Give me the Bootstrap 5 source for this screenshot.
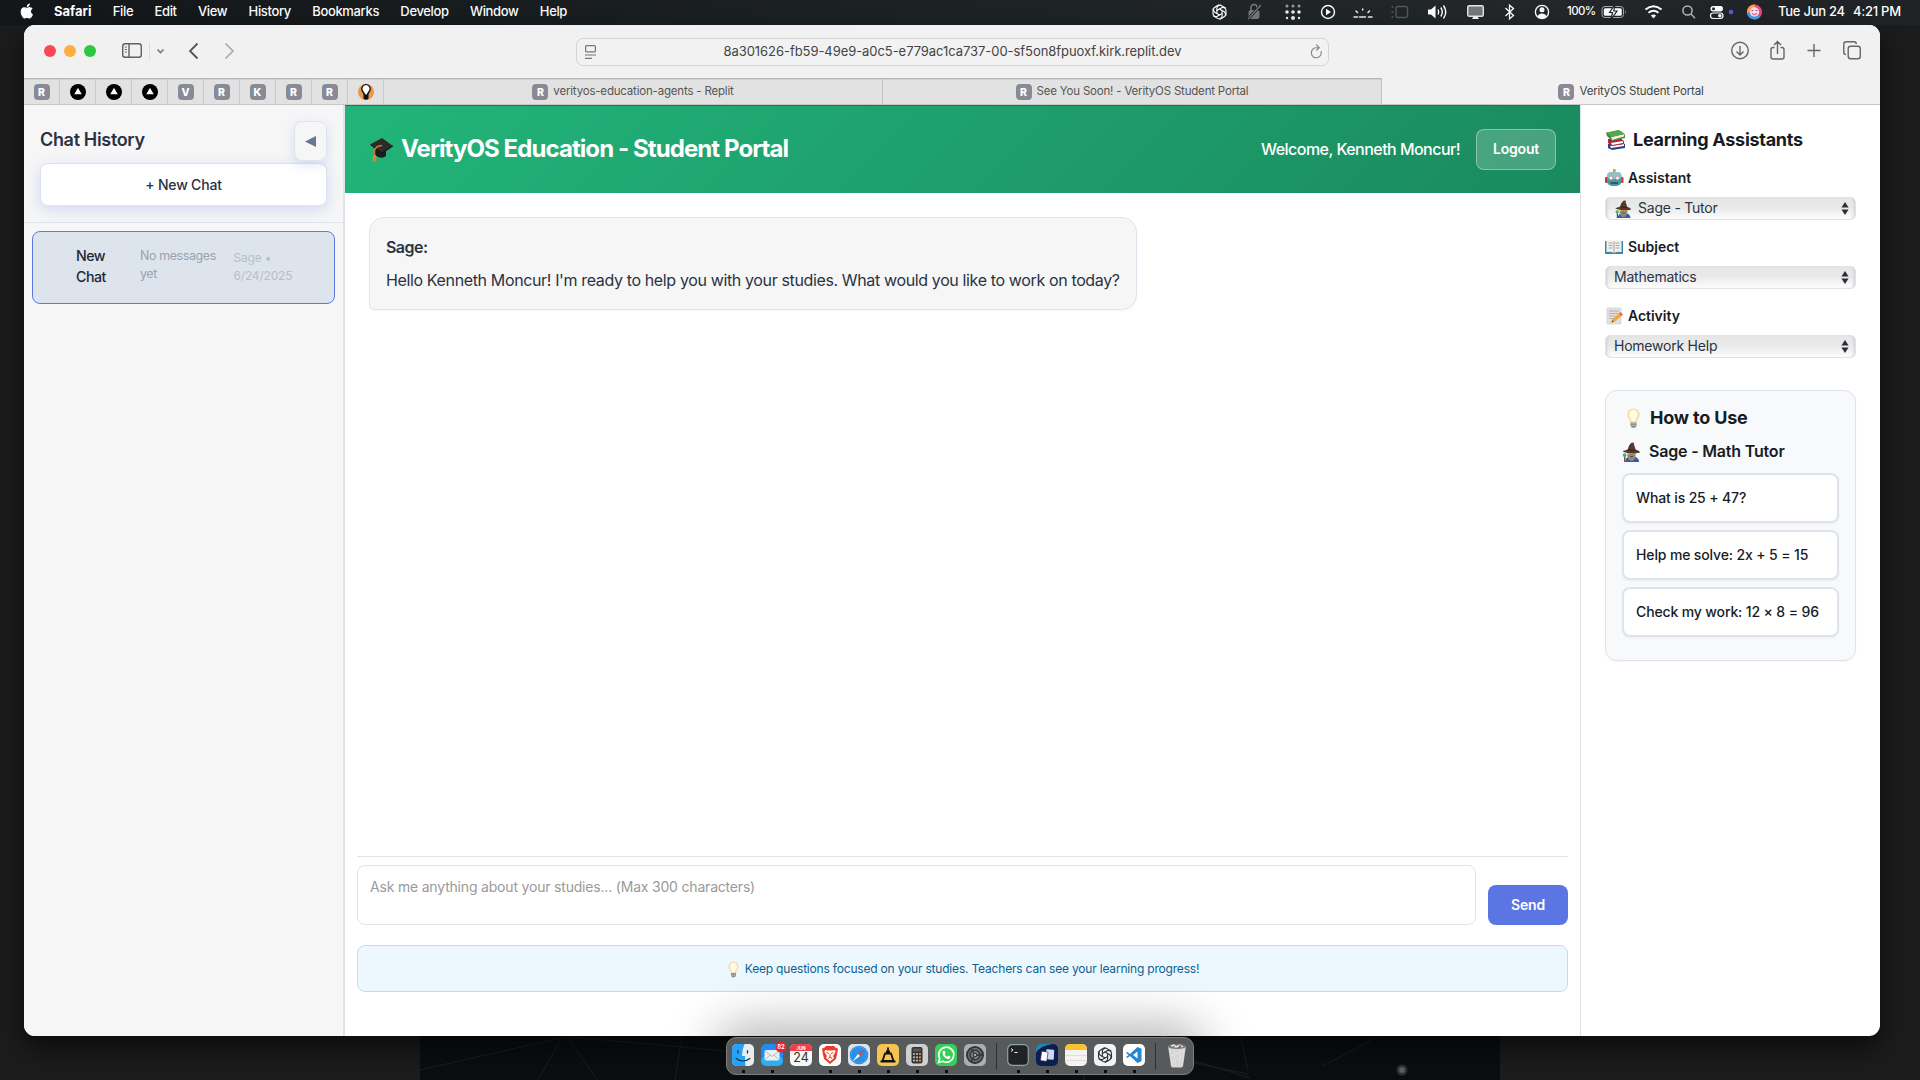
<!DOCTYPE html>
<html lang="en">
<head>
<meta charset="utf-8">
<title>VerityOS Student Portal</title>
<link href="https://cdn.jsdelivr.net/npm/bootstrap@5.3.0/dist/css/bootstrap.min.css" rel="stylesheet">
<style>
:root{--edge:#dde4ec;--ink:#2a3342;--deep:#171c24}
body{width:1920px;height:1080px;overflow:hidden;background:#1c1c1c;font-family:Inter,"Liberation Sans",sans-serif;font-size:14px;line-height:1.2;color:var(--ink)}
.ls{white-space:nowrap;display:block;flex:none;letter-spacing:-.19px}
.wallpaper{position:absolute;left:420px;top:1036px;z-index:0}
.menubar{height:25px;background:linear-gradient(90deg,#13171a,#1d2225 50%,#23272a 80%,#202325);color:#fff;font-size:13px;font-weight:500;padding:0 19px 1px 20px}
.menus{gap:21.3px}
.menus .ls{letter-spacing:-.35px}
.menus .fw-bold{letter-spacing:0}
.menubar svg{display:block;flex:none}
.pct{width:40px;padding-left:9px;font-size:11.5px;letter-spacing:-.6px}
.date{width:83px;padding-left:8px;letter-spacing:-.26px}
.time{width:48px;letter-spacing:-.26px}
.window{height:1011px;margin:0 40px 0 24px;border-radius:11px;overflow:hidden;background:#fff;box-shadow:0 12px 28px rgba(0,0,0,.6)}
.toolbar{height:53px;background:#f1f1f1}
.toolbar svg,.tabstrip svg{display:block;flex:none}
.urlbox{width:753px;height:28px;border:1px solid #d3d3d3;border-radius:7px;background:#f2f2f2;color:#444;font-size:13px}
.url{letter-spacing:-.058px}
.tabstrip{height:27px;background:#e2e2e2;border-top:1px solid #b6b6b6;border-bottom:1px solid #c6c6c6;color:#555;font-size:11.5px}
.pinned{width:36px;border-right:1px solid #cbcbcb;box-shadow:inset 0 1px 0 #d2d2d2}
.tabitem{width:499px;border-right:1px solid #c3c3c3;gap:5px;box-shadow:inset 0 1px 0 #d2d2d2}
.tabitem.active{background:#f1f1f1;border:0;width:498px;margin-top:-1px;padding-top:1px;color:#444;box-shadow:none}
.fav{width:16px;height:16px;border-radius:4px;background:#8a8a97;color:#fff;font-size:10.5px;font-weight:800;line-height:17px;text-align:center;flex:none}
.side{width:321px;background:#f6f6f7;border-right:2px solid var(--edge)}
.side-top{height:118px;padding:16px 16px 0;border-bottom:1px solid var(--edge)}
.h-side{font-size:18px;font-weight:600;letter-spacing:-.33px;margin-bottom:3px}
.collapse-btn{width:33px;height:40px;border:1px solid var(--edge);border-radius:8px;background:#f6f6f7;box-shadow:0 4px 12px rgba(91,110,227,.18)}
.newchat{height:43px;margin-top:2px;padding-top:2px;border:1px solid var(--edge);border-radius:8px;background:#fff;font-weight:500;font-size:14px;box-shadow:0 4px 14px rgba(91,110,227,.22)}
.conv{margin:8px 8px 0;height:73px;border:1px solid #5f78e2;border-radius:8px;background:#dee4ec}
.conv-name{width:64px;margin-left:43px;padding-top:12.5px;font-size:14.2px;font-weight:500;line-height:21px;color:#202836}
.conv-name .ls{letter-spacing:-.5px}
.conv-msg{width:93.5px;padding-top:15px;font-size:12.4px;line-height:18px;color:#98a2b0}
.conv-msg .ls{letter-spacing:-.35px}
.conv-date{padding-top:17px;font-size:12px;line-height:18px;color:#b7bfca}
.hero{height:88px;padding:0 24px;border-top:1px solid #177a53;background:linear-gradient(135deg,#22b57a,#1a8a5e);color:#fff}
.hero-title{font-size:24px;font-weight:700;letter-spacing:-.92px}
.welcome{font-size:16px;font-weight:500;margin-right:16px;letter-spacing:-.53px}
.logout{width:80px;height:41px;border:1px solid rgba(255,255,255,.35);border-radius:8px;background:rgba(255,255,255,.2);font-size:14px;font-weight:600}
.bubble{width:768px;height:93px;margin:24px 0 0 24px;padding:16.5px 16px;border:1px solid #e0e5ed;border-radius:15px 15px 15px 5px;background:#f6f6f6;font-size:16px;line-height:24px;box-shadow:0 1px 2px rgba(0,0,0,.04)}
.bubble .ls{letter-spacing:-.365px}
.bubble .who{font-weight:600;margin-bottom:9px;letter-spacing:-.54px}
.composer{margin:0 12px;border-top:1px solid var(--edge);padding-top:8px}
.prompt-box{width:1119px;height:60px;border:1px solid var(--edge);border-radius:8px;padding:13px 12px;color:#9a9a9a;font-size:14px}
.send{width:80px;height:40px;padding-top:1px;border-radius:8px;background:#5b76e3;color:#fff;font-weight:600;font-size:14px}
.notice{height:47px;margin:20px 12px 44px;padding-top:2px;border:1px solid #b5e2f3;border-radius:8px;background:#edf8fe;color:#0d5f93;font-size:12px;gap:4px}
.assist{width:300px;border-left:1px solid var(--edge);padding:23px 24px 0}
.assist svg,.notice svg,.hero svg{display:block;flex:none}
.h-assist{font-size:18px;font-weight:700;color:var(--deep);height:24px}
.h-assist .ls{letter-spacing:-.286px}
.fieldname{font-size:14px;font-weight:600;color:var(--deep);height:20px;margin-bottom:9px}
.fieldname .ls{letter-spacing:-.03px}
.picker+.fieldname{margin-top:17px}
.picker{height:23px;border:1px solid var(--edge);border-radius:5px;background:linear-gradient(180deg,#e6e6e6,#e9e9e9 45%,#fdfdfd);font-size:14px;padding:0 6px 0 8px;box-shadow:inset 3px 0 3px -2px #cfcfcf,inset -3px 0 3px -2px #cfcfcf}
.picker .ls{letter-spacing:-.23px}
.guide{height:271px;margin-top:32px;border:1px solid var(--edge);border-radius:12px;background:#f7f9fb;padding:15px 16px;color:var(--deep);box-shadow:0 1px 2px rgba(0,0,0,.04)}
.guide-h{font-size:18px;font-weight:700;height:24px}
.guide-s{font-size:16px;font-weight:600;height:22px;margin:11px 0 10px}
.sample{height:50px;border:2px solid var(--edge);border-radius:8px;background:#fff;padding:0 12px;font-size:14px;font-weight:500;margin-bottom:7px;box-shadow:0 1px 2px rgba(0,0,0,.05)}
.sample .ls{letter-spacing:-.135px}
.dockglow{position:absolute;left:660px;top:966px;width:600px;height:70px;overflow:hidden;z-index:2}
.dockglow::after{content:"";position:absolute;left:66px;top:70px;width:468px;height:30px;border-radius:10px;box-shadow:0 0 50px 8px rgba(0,0,0,.34)}
.dock{position:absolute;left:726px;top:1037px;width:468px;height:38px;z-index:3;border:1px solid #7c7e7f;border-radius:10px;background:#575a5b;padding:0 3px;gap:3px}
.dock>div{width:26px;height:36px;padding-top:5.5px;flex:none}
.dock svg{display:block;margin:auto}
.dock .run::after{content:"";display:block;width:3px;height:3px;margin:4.5px auto 0;background:#080808}
.dock>.sep{width:11px;margin:0;padding:5px 0 0}
.sep::after{content:"";display:block;width:1px;height:27px;margin:auto;background:#2d2f30}
</style>
<script src="https://cdn.jsdelivr.net/npm/bootstrap@5.3.0/dist/js/bootstrap.bundle.min.js"></script>
</head>
<body class="position-relative d-flex flex-column">
<svg width="0" height="0" class="position-absolute"><defs>
<symbol id="bulb" viewBox="0 0 24 24"><path d="M12 1C7.600 1 5 4.200 5 8c0 3.500 2.600 5 3.400 9h7.200C16.400 13 19 11.500 19 8c0-3.800-2.600-7-7-7z" fill="#f3dc9c"/><path d="M12 2.500C9 2.500 7 5 7 8c0 3 2.500 4.500 3 8h4c.5-3.500 3-5 3-8 0-3-2-5.500-5-5.500z" fill="#fffbe4"/><path d="M8.500 17h7v3.500L14 23h-4l-1.500-2.500z" fill="#8c8c8c"/><path d="M8.500 18.500h7M8.700 20.500h6.600" stroke="#bbb" stroke-width=".8"/></symbol>
<symbol id="wizard" viewBox="0 0 20 22"><path d="M3 22c0-4 3-6 7-6s8 1 8.500 6z" fill="#3659a8"/><circle cx="10" cy="13" r="4.800" fill="#f3b636"/><path d="M5.500 14c2-1 7-1 9 0 .5 4-2 7-4.500 7s-5-3-4.500-7z" fill="#8a8984"/><path d="M8.500 16h3" stroke="#5d3a29"/><path d="M0 10.500C2 9 5 9 6 8c.5-3 2-6 4.500-7.500L13 1l-.4 2C14 5 14 7 14.500 8.500c2 .5 4 1 5 3-6 1.800-14 1.500-19.500-1z" fill="#55392c"/><path d="M6 8c3 1.300 6 1.300 8.500.5" stroke="#2c1c16" fill="none"/><path d="M2.500 13v9" stroke="#704a30" stroke-width="1.500"/><circle cx="2.300" cy="14.500" r="2" fill="#33bb70"/></symbol>
<symbol id="knot" viewBox="-8 -8 16 16"><g fill="none" stroke="currentColor" stroke-width="1.150" stroke-linecap="round"><path d="M-2.600 1.500V-4a3.100 3.100 0 0 1 5-2.100L6 -4"/><path d="M-2.600 1.500V-4a3.100 3.100 0 0 1 5-2.100L6 -4" transform="rotate(60)"/><path d="M-2.600 1.500V-4a3.100 3.100 0 0 1 5-2.100L6 -4" transform="rotate(120)"/><path d="M-2.600 1.500V-4a3.100 3.100 0 0 1 5-2.100L6 -4" transform="rotate(180)"/><path d="M-2.600 1.500V-4a3.100 3.100 0 0 1 5-2.100L6 -4" transform="rotate(240)"/><path d="M-2.600 1.500V-4a3.100 3.100 0 0 1 5-2.100L6 -4" transform="rotate(300)"/></g></symbol>
<symbol id="tri" viewBox="0 0 16 16"><circle cx="8" cy="8" r="8" fill="#000"/><path d="M8 3.700l3.700 6.600H4.300z" fill="#fff"/></symbol>
<symbol id="updown" viewBox="0 0 8 13"><path d="M4 0l3.600 5.400H.4zM4 13l3.600-5.400H.4z" fill="#2a303a"/></symbol>
</defs></svg>

<!-- desktop wallpaper visible under the window -->
<svg class="wallpaper" width="1080" height="44"><rect width="1080" height="44" fill="#0a0e11"/><g stroke="#1a2023" fill="none"><path d="M143 0L118 44M147 0L177 44M140 2L0 34M150 1L306 15M262 0L255 44M700 2L830 42M820 0L828 34M903 30L960 0M828 38L700 12M664 0v44"/></g><circle cx="744" cy="3" r="4" fill="#2c3032"/><circle cx="982" cy="34" r="5.500" fill="#2c3133"/><circle cx="982" cy="34" r="3" fill="#5c6062"/></svg>

<div class="menubar d-flex align-items-center position-relative">
  <svg width="34" height="24" viewBox="0 0 34 24"><path transform="translate(-.7 3.500) scale(.94)" fill="#fff" d="M11.182.008C11.148-.03 9.923.023 8.857 1.180c-1.066 1.156-.902 2.482-.878 2.516s1.520.087 2.475-1.258.762-2.391.728-2.430m3.314 11.733c-.048-.096-2.325-1.234-2.113-3.422s1.675-2.789 1.698-2.854-.597-.79-1.254-1.157a3.700 3.700 0 0 0-1.563-.434c-.108-.003-.483-.095-1.254.116-.508.139-1.653.589-1.968.607-.316.018-1.256-.522-2.267-.665-.647-.125-1.333.131-1.824.328-.49.196-1.422.754-2.074 2.237-.652 1.482-.311 3.830-.067 4.560s.625 1.924 1.273 2.796c.576.984 1.340 1.667 1.659 1.899s1.219.386 1.843.067c.502-.308 1.408-.485 1.766-.472.357.013 1.061.154 1.782.539.571.197 1.111.115 1.652-.105.541-.221 1.324-1.059 2.238-2.758q.52-1.185.473-1.282"/></svg>
  <div class="menus d-flex">
    <span class="ls fw-bold">Safari</span><span class="ls">File</span><span class="ls">Edit</span><span class="ls">View</span><span class="ls">History</span><span class="ls">Bookmarks</span><span class="ls">Develop</span><span class="ls">Window</span><span class="ls">Help</span>
  </div>
  <div class="d-flex align-items-center ms-auto">
    <svg width="35" height="24" viewBox="1202 0 35 24"><use href="#knot" x="1211.500" y="4" width="16" height="16"/></svg>
    <svg width="36" height="24" viewBox="1237 0 36 24" fill="none" stroke="#77797b"><rect x="1249" y="10.500" width="10" height="8" rx="1.500" fill="#77797b"/><path d="M1251 10V7.500a3 3 0 0 1 6 0V10" stroke-width="1.500"/><path d="M1248 19l13-14" stroke="#202427" stroke-width="2.800"/><path d="M1248 19l13-14" stroke-width="1.200"/></svg>
    <svg width="38" height="24" viewBox="1273 0 38 24" fill="#eee"><g fill="#999"><circle cx="1287" cy="6" r="1.500"/><circle cx="1293" cy="6" r="1.500"/><circle cx="1299" cy="6" r="1.500"/></g><circle cx="1287" cy="12" r="1.800"/><circle cx="1293" cy="12" r="1.800"/><circle cx="1299" cy="12" r="1.800"/><circle cx="1287" cy="18" r="1.200"/><circle cx="1293" cy="18" r="2"/><circle cx="1299" cy="18" r="1.200"/></svg>
    <svg width="33" height="24" viewBox="1311 0 33 24"><circle cx="1328" cy="12" r="6.500" fill="none" stroke="#fff" stroke-width="1.400"/><path d="M1326 8.700l5 3.300-5 3.300z" fill="#fff"/></svg>
    <svg width="38" height="24" viewBox="1344 0 38 24" fill="none" stroke="#eee" stroke-width="1.500" stroke-linecap="round"><path d="M1354 17h3.500M1368.500 17h3.500M1359.500 17h6M1362.700 9v1M1356 11l1.500 1.500M1369.500 11l-1.500 1.500"/></svg>
    <svg width="36" height="24" viewBox="1382 0 36 24" fill="none" stroke="#55585a" stroke-width="1.400"><rect x="1396" y="6.500" width="11.500" height="11" rx="2"/><path d="M1391.500 7h2M1391.500 12h2M1391.500 17h2"/></svg>
    <svg width="39" height="24" viewBox="1418 0 39 24"><path d="M1428 9.500h3l4.500-4v13l-4.500-4h-3z" fill="#fff"/><path d="M1438 9.500q1.500 2.500 0 5M1440.800 7.500q3 4.500 0 9M1443.500 5.500q4.500 6.500 0 13" fill="none" stroke="#fff" stroke-width="1.400"/></svg>
    <svg width="37" height="24" viewBox="1457 0 37 24"><rect x="1467.700" y="5.700" width="15.600" height="10.600" rx="1.500" fill="#777" stroke="#e8e8e8" stroke-width="1.400"/><path d="M1472 19l1.500-2.500h4l1.500 2.500z" fill="#fff"/></svg>
    <svg width="31" height="24" viewBox="1494 0 31 24"><path d="M1505.500 8l8 7.500-4 3.300V5.200l4 3.300-8 7.500" fill="none" stroke="#fff" stroke-width="1.300"/></svg>
    <svg width="33" height="24" viewBox="1525 0 33 24"><circle cx="1542" cy="12" r="6.600" fill="none" stroke="#fff" stroke-width="1.300"/><circle cx="1542" cy="9.800" r="2.500" fill="#fff"/><path d="M1537.500 16.500c1-4 8-4 9 0-2 2.500-7 2.500-9 0z" fill="#fff"/></svg>
    <span class="ls pct">100%</span>
    <svg width="37" height="24" viewBox="1598 0 37 24"><rect x="1602" y="6.500" width="21.500" height="11" rx="3" fill="none" stroke="#aaa"/><rect x="1603.800" y="8.200" width="18" height="7.600" rx="1.500" fill="#fff"/><path d="M1625 10v4q1.500-2 0-4z" fill="#aaa"/><path d="M1615 4.500l-5.500 8h3l-1.500 7 6-8.500h-3.200z" fill="#fff" stroke="#202325" stroke-width="1.200"/></svg>
    <svg width="37" height="24" viewBox="1635 0 37 24" fill="none" stroke="#fff" stroke-width="2"><path d="M1645.500 9.500q8-6.500 16 0M1648.500 12.800q5-4 10 0"/><path d="M1653.500 18.500l-2.600-3q2.600-2 5.200 0z" fill="#fff" stroke="none"/></svg>
    <svg width="30" height="24" viewBox="1672 0 30 24" fill="none" stroke="#b5b7b8" stroke-width="1.500"><circle cx="1687.500" cy="10.500" r="4.600"/><path d="M1691 14l4 4.200"/></svg>
    <svg width="37" height="24" viewBox="1702 0 37 24"><rect x="1710.500" y="6" width="12.500" height="5.500" rx="2.700" fill="#fff"/><circle cx="1713.500" cy="8.700" r="1.500" fill="#222"/><rect x="1710.500" y="13" width="12.500" height="5.500" rx="2.700" fill="none" stroke="#fff" stroke-width="1.200"/><circle cx="1719.800" cy="15.700" r="1.800" fill="#fff"/><circle cx="1731" cy="12" r="2.300" fill="#5a58e8"/></svg>
    <svg width="31" height="24" viewBox="1739 0 31 24"><circle cx="1754.500" cy="12" r="7.600" fill="#e94a7c"/><path d="M1747 13a7.600 7.600 0 0 1 8-8.600l-1 7.600z" fill="#ff9d4d"/><path d="M1747 13a7.600 7.600 0 0 0 13 4l-6-5z" fill="#39a4ee"/><circle cx="1754.500" cy="12" r="4.700" fill="#fbdbe8"/><path d="M1751.500 10.500h2M1755.500 10.500h2M1752 13.500q2.500 2.500 5 0" stroke="#c44b88" fill="none"/></svg>
    <span class="ls date">Tue Jun 24</span><span class="ls time">4:21 PM</span>
  </div>
</div>

<div class="window d-flex flex-column position-relative">
  <div class="toolbar d-flex align-items-center">
    <svg width="552" height="53" viewBox="24 25 552 53" fill="none"><circle cx="50" cy="51" r="6" fill="#fc4654"/><circle cx="70" cy="51" r="6" fill="#fdae3e"/><circle cx="90" cy="51" r="6" fill="#2bc840"/><g stroke="#606060" stroke-width="1.400"><rect x="122.700" y="43.700" width="18.600" height="13.600" rx="2.500"/><path d="M129 44v13"/><path d="M124.800 47h2M124.800 49.500h2M124.800 52h2" stroke-width="1"/></g><path d="M149.500 42v18" stroke="#ddd"/><path d="M157.500 49.500l3 3 3-3" stroke="#777" stroke-width="1.600"/><path d="M197.500 43.500l-7.500 7.500 7.500 7.500" stroke="#555" stroke-width="1.800"/><path d="M225.500 43.500l7.500 7.500-7.500 7.500" stroke="#aaa" stroke-width="1.600"/></svg>
    <div class="urlbox d-flex align-items-center justify-content-between">
      <svg width="27" height="26" viewBox="577 38 27 26" fill="none" stroke="#777" stroke-width="1.200"><rect x="585.600" y="44.600" width="9.800" height="6.300" rx="1"/><path d="M585 54h11M585 57.300h7"/></svg>
      <span class="ls url">8a301626-fb59-49e9-a0c5-e779ac1ca737-00-sf5on8fpuoxf.kirk.replit.dev</span>
      <svg width="27" height="26" viewBox="1301 38 27 26" fill="none" stroke="#8a8a8a" stroke-width="1.200"><path d="M1321 50a5 5 0 1 1-4-3.200h2M1316.300 43.500l3 3.200-3 3"/></svg>
    </div>
    <svg width="551" height="53" viewBox="1329 25 551 53" fill="none" stroke="#666" stroke-width="1.400"><circle cx="1740" cy="50.500" r="8.300"/><path d="M1740 46v8.500M1736.500 51.500l3.500 3.500 3.500-3.500"/><path d="M1774.500 47.500h-1.500q-2 0-2 2v7.500q0 2 2 2h9q2 0 2-2v-7.500q0-2-2-2h-1.500M1777.500 54V42M1774 45l3.500-3.500 3.500 3.500"/><path d="M1807.500 50.500h13M1814 44v13"/><rect x="1848.200" y="46.200" width="12.100" height="12.600" rx="2.500"/><path d="M1846 54.500q-2.200 0-2.200-2.200v-8q0-2.500 2.500-2.500h7.700q2.300 0 2.300 2.200"/></svg>
  </div>
  <div class="tabstrip d-flex align-items-stretch">
    <div class="pinned d-flex align-items-center justify-content-center"><span class="fav">R</span></div>
    <div class="pinned d-flex align-items-center justify-content-center"><svg width="16" height="16"><use href="#tri"/></svg></div>
    <div class="pinned d-flex align-items-center justify-content-center"><svg width="16" height="16"><use href="#tri"/></svg></div>
    <div class="pinned d-flex align-items-center justify-content-center"><svg width="16" height="16"><use href="#tri"/></svg></div>
    <div class="pinned d-flex align-items-center justify-content-center"><span class="fav">V</span></div>
    <div class="pinned d-flex align-items-center justify-content-center"><span class="fav">R</span></div>
    <div class="pinned d-flex align-items-center justify-content-center"><span class="fav">K</span></div>
    <div class="pinned d-flex align-items-center justify-content-center"><span class="fav">R</span></div>
    <div class="pinned d-flex align-items-center justify-content-center"><span class="fav">R</span></div>
    <div class="pinned d-flex align-items-center justify-content-center"><svg width="16" height="16" viewBox="0 0 16 16"><circle cx="8" cy="8" r="8" fill="#e9984d"/><path d="M8 0a5 5 0 0 0-4.600 6.500C4 8.500 5.500 9 5.500 11v3.500Q8 17 10.500 14.500V11c0-2 1.500-2.500 2.100-4.500A5 5 0 0 0 8 0z" fill="#111"/><path d="M8 1a3.900 3.900 0 0 0-2 7l1.500 2.500h1L10 8a3.900 3.900 0 0 0-2-7z" fill="#fff"/></svg></div>
    <div class="tabitem d-flex align-items-center justify-content-center"><span class="fav">R</span><span class="ls">verityos-education-agents - Replit</span></div>
    <div class="tabitem d-flex align-items-center justify-content-center"><span class="fav">R</span><span class="ls">See You Soon! - VerityOS Student Portal</span></div>
    <div class="tabitem active d-flex align-items-center justify-content-center"><span class="fav">R</span><span class="ls">VerityOS Student Portal</span></div>
  </div>

  <div class="d-flex flex-grow-1">
    <aside class="side">
      <div class="side-top">
        <div class="d-flex align-items-center justify-content-between"><span class="ls h-side">Chat History</span>
          <div class="collapse-btn d-flex align-items-center justify-content-center"><svg width="11" height="11"><path d="M11 0v11L0 5.500z" fill="#68788f"/></svg></div></div>
        <div class="newchat d-flex align-items-center justify-content-center"><span class="ls">+ New Chat</span></div>
      </div>
      <div class="conv d-flex">
        <div class="conv-name"><span class="ls">New</span><span class="ls">Chat</span></div>
        <div class="conv-msg"><span class="ls">No messages</span><span class="ls">yet</span></div>
        <div class="conv-date"><span class="ls">Sage •</span><span class="ls">6/24/2025</span></div>
      </div>
    </aside>

    <main class="d-flex flex-column flex-grow-1">
      <header class="hero d-flex align-items-center">
        <svg width="32" height="26" viewBox="0 0 32 26"><path d="M6 11v7q6 5 11 1v-7z" fill="#1b1b1b"/><path d="M1 7.500L13 1l11 8-11 8z" fill="#2c2c2c"/><path d="M2 8l11 8 11-7" fill="none" stroke="#111"/><path d="M13 8.500Q6 9 5.500 14v5" fill="none" stroke="#c47c2c" stroke-width="1.500"/><path d="M4 18h3l.5 6.500h-4z" fill="#d8862d"/></svg>
        <span class="ls hero-title">VerityOS Education - Student Portal</span>
        <span class="ls ms-auto welcome">Welcome, Kenneth Moncur!</span>
        <div class="logout d-flex align-items-center justify-content-center"><span class="ls">Logout</span></div>
      </header>
      <div class="bubble"><span class="ls who">Sage:</span><span class="ls">Hello Kenneth Moncur! I'm ready to help you with your studies. What would you like to work on today?</span></div>
      <div class="composer d-flex align-items-end justify-content-between mt-auto">
        <div class="prompt-box"><span class="ls">Ask me anything about your studies... (Max 300 characters)</span></div>
        <div class="send d-flex align-items-center justify-content-center"><span class="ls">Send</span></div>
      </div>
      <div class="notice d-flex align-items-center justify-content-center"><svg width="15" height="17" viewBox="0 0 15 17"><use href="#bulb" x="-1" width="17" height="17"/></svg><span class="ls">Keep questions focused on your studies. Teachers can see your learning progress!</span></div>
    </main>

    <aside class="assist">
      <div class="h-assist d-flex align-items-center"><svg width="28" height="22" viewBox="0 0 28 22"><path d="M3 15l13-2 4 2v4l-13 2-4-2z" fill="#2e3f86"/><path d="M5 17l14-2v2L6 19z" fill="#fff"/><path d="M3 10l12-1 4 3v3L7 17l-4-3z" fill="#b52438"/><path d="M6 14l12-2v2L7 16z" fill="#fff"/><path d="M1 4l13-3 6 5v3L7 12 2 7z" fill="#3f8c47"/><path d="M6 8l13-3v2.500L7 11z" fill="#f3eedd"/><path d="M1 3.500L14 1l6 4-13 3z" fill="#58a44f"/></svg><span class="ls">Learning Assistants</span></div>
      <div class="fieldname d-flex align-items-center mt-3"><svg width="23" height="18" viewBox="0 0 23 18"><path d="M9 0v3" stroke="#d04a31" stroke-width="2"/><circle cx="9.500" cy="1.500" r="1.500" fill="#f2a23c"/><rect x="0" y="8" width="3" height="6" rx="1" fill="#c33d3d"/><rect x="15.500" y="8" width="3" height="6" rx="1" fill="#c33d3d"/><rect x="2" y="3" width="14.500" height="14" rx="5" fill="#4d97a3"/><rect x="2" y="3" width="14.500" height="7" rx="4" fill="#8fc2c6"/><circle cx="6" cy="9" r="1.900" fill="#e7ffff" stroke="#c77" stroke-width=".7"/><circle cx="12.500" cy="9" r="1.900" fill="#e7ffff" stroke="#c77" stroke-width=".7"/><path d="M5.500 14h7.500" stroke="#184c55" stroke-width="1.600"/></svg><span class="ls">Assistant</span></div>
      <div class="picker d-flex align-items-center"><svg width="24" height="18" viewBox="0 0 24 18"><use href="#wizard" x="1" width="17" height="18"/></svg><span class="ls">Sage - Tutor</span><svg class="ms-auto" width="8" height="13"><use href="#updown"/></svg></div>
      <div class="fieldname d-flex align-items-center"><svg width="23" height="18" viewBox="0 0 23 18"><path d="M0 3h18v13H0z" fill="#3c87ad"/><path d="M1.500 2Q6 1 9 3q3-2 7.500-1v12Q12 13 9 15q-3-2-7.500-1z" fill="#f4f2ec"/><path d="M9 3v12M3.500 5h4M3.500 7.500h4M3.500 10h4M10.500 5h4M10.500 7.500h4M10.500 10h4" stroke="#999b9d" stroke-width=".9"/></svg><span class="ls">Subject</span></div>
      <div class="picker d-flex align-items-center"><span class="ls">Mathematics</span><svg class="ms-auto" width="8" height="13"><use href="#updown"/></svg></div>
      <div class="fieldname d-flex align-items-center"><svg width="23" height="18" viewBox="0 0 23 18"><path d="M2 1h14v16H2z" fill="#e2e0dc" stroke="#cfcdca" stroke-width=".6"/><path d="M4 4h10M4 6.500h9M4 9h6M4 11.500h4" stroke="#aaa" stroke-width=".8"/><path d="M6.500 15.500l1-3.500 7.500-6.500 2.500 2.500-7.500 6.500z" fill="#f0a934"/><path d="M14 6.400l1.400-1.300 2.500 2.500-1.400 1.300z" fill="#e0636a"/><path d="M6.500 15.500l.6-2.200 1.600 1.500z" fill="#444"/></svg><span class="ls">Activity</span></div>
      <div class="picker d-flex align-items-center"><span class="ls">Homework Help</span><svg class="ms-auto" width="8" height="13"><use href="#updown"/></svg></div>
      <div class="guide">
        <div class="guide-h d-flex align-items-center"><svg width="28" height="22" viewBox="0 0 28 22"><use href="#bulb" x="1" width="21" height="22"/></svg><span class="ls">How to Use</span></div>
        <div class="guide-s d-flex align-items-center"><svg width="27" height="20" viewBox="0 0 27 20"><use href="#wizard" x=".5" width="18" height="20"/></svg><span class="ls">Sage - Math Tutor</span></div>
        <div class="sample d-flex align-items-center"><span class="ls">What is 25 + 47?</span></div>
        <div class="sample d-flex align-items-center"><span class="ls">Help me solve: 2x + 5 = 15</span></div>
        <div class="sample d-flex align-items-center"><span class="ls">Check my work: 12 × 8 = 96</span></div>
      </div>
    </aside>
  </div>
</div>

<div class="dockglow"></div>
<div class="dock d-flex">
  <div class="run"><svg width="22" height="22" viewBox="0 0 22 22"><rect width="22" height="22" rx="5" fill="#e8edf2"/><path d="M5 0h7.500Q10 6 10 12h3q-.3 5 .6 10H5a5 5 0 0 1-5-5V5a5 5 0 0 1 5-5z" fill="#26a3f4"/><path d="M6 6.500v2.500M15.500 6.500v2.500M4 14.500q7 5 14 0" fill="none" stroke="#16324c" stroke-width="1.200" stroke-linecap="round"/></svg></div>
  <div class="run"><svg width="22" height="22" viewBox="0 0 22 22" overflow="visible"><rect width="22" height="22" rx="5" fill="#1f8cf3"/><rect y="12" width="22" height="10" rx="5" fill="#2aaef5"/><rect x="3.500" y="6" width="15" height="10.500" rx="1.500" fill="#eceff2"/><path d="M4 7l7 5.500L18 7M4 16l5-5M18 16l-5-5" fill="none" stroke="#b5bcc4"/><circle cx="20" cy="3" r="5.500" fill="#eb1f38"/><text x="20" y="5.200" text-anchor="middle" font-size="6" font-weight="600" fill="#fff">82</text></svg></div>
  <div><svg width="22" height="22" viewBox="0 0 22 22"><rect width="22" height="22" rx="5" fill="#f7f7f5"/><path d="M0 7V5a5 5 0 0 1 5-5h12a5 5 0 0 1 5 5v2z" fill="#ef4048"/><text x="11" y="5.500" text-anchor="middle" font-size="4.500" font-weight="700" fill="#fff">JUN</text><text x="11" y="18" text-anchor="middle" font-size="12.500" fill="#333">24</text></svg></div>
  <div class="run"><svg width="22" height="22" viewBox="0 0 22 22"><rect width="22" height="22" rx="5" fill="#fff"/><path d="M7 2h8l2 2 2 .5-.5 3.500L17 15l-6 5-6-5L3.500 8 3 4.500 5 4z" fill="#ee3b28"/><path d="M6 6l3 .5h4l3-.5.5 2-2.500 4 1 2-4 3.500L7 14l1-2-2.500-4z" fill="#fff"/><path d="M7.500 8.500l2.500 1M14.500 8.500l-2.500 1M11 10v3l-2 1.500M11 13l2 1.500" stroke="#ee3b28" fill="none"/></svg></div>
  <div class="run"><svg width="22" height="22" viewBox="0 0 22 22"><rect width="22" height="22" rx="5" fill="#dfe3e7"/><circle cx="11" cy="11" r="9.300" fill="#2b8fe6"/><circle cx="11" cy="11" r="8" fill="none" stroke="#7bc0f5" stroke-dasharray=".7 1.400"/><path d="M17.500 4.500L12 12l-2-2z" fill="#e7433e"/><path d="M4.500 17.500L10 10l2 2z" fill="#fff"/></svg></div>
  <div class="run"><svg width="22" height="22" viewBox="0 0 22 22"><rect width="22" height="22" rx="5" fill="#f5c452"/><path d="M11 3.500v4M9 7.500h4M8 9.500h6l2.500 7.500h-11z" fill="none" stroke="#111" stroke-width="1.800"/><path d="M3.500 17.500h15" stroke="#111" stroke-width="2"/></svg></div>
  <div class="run"><svg width="22" height="22" viewBox="0 0 22 22"><rect width="22" height="22" rx="5" fill="#cfcfd0"/><rect x="5.500" y="3" width="11" height="16.500" rx="2" fill="#333"/><rect x="7" y="4.500" width="8" height="3" fill="#595959"/><g fill="#bbb"><circle cx="8" cy="10" r="1.100"/><circle cx="11" cy="10" r="1.100"/><circle cx="8" cy="13.300" r="1.100"/><circle cx="11" cy="13.300" r="1.100"/><circle cx="8" cy="16.600" r="1.100"/><circle cx="11" cy="16.600" r="1.100"/></g><g fill="#f79434"><circle cx="14" cy="10" r="1.100"/><circle cx="14" cy="13.300" r="1.100"/><circle cx="14" cy="16.600" r="1.100"/></g></svg></div>
  <div class="run"><svg width="22" height="22" viewBox="0 0 22 22"><rect width="22" height="22" rx="5" fill="#35cf56"/><path d="M3.500 18.500l1.200-4.200A7.500 7.500 0 1 1 7.700 17.300z" fill="none" stroke="#fff" stroke-width="1.700"/><path d="M8 7l1.500-.3 1 2.300-1 1.200q1 1.800 2.700 2.500l1.100-1.200 2.200 1q0 2.500-2.500 2.600C9.500 14.500 6.500 10.500 8 7z" fill="#fff"/></svg></div>
  <div><svg width="22" height="22" viewBox="0 0 22 22"><rect width="22" height="22" rx="5" fill="#a8b0b5"/><circle cx="11" cy="11" r="8" fill="#777c80" stroke="#333" stroke-width="2"/><circle cx="11" cy="11" r="5" fill="none" stroke="#333" stroke-width="1.600"/><path d="M11 11h7M11 11L7.500 5M11 11l-3.500 6" stroke="#333" stroke-width="1.400"/><circle cx="11" cy="11" r="1.800" fill="#aaa" stroke="#333"/></svg></div>
  <div class="sep"></div>
  <div class="run"><svg width="22" height="22" viewBox="0 0 22 22"><rect x=".7" y=".7" width="20.600" height="20.600" rx="4.500" fill="#202223" stroke="#8fa3a3" stroke-width="1.200"/><path d="M4 4.500l2 1.500-2 1.500M7.500 8.500h3" fill="none" stroke="#eee"/></svg></div>
  <div class="run"><svg width="22" height="22" viewBox="0 0 22 22"><rect width="22" height="22" rx="5" fill="#0b1f4e"/><path d="M0 9V5a5 5 0 0 1 5-5h12q-14 2-17 9z" fill="#2489ae"/><rect x="10" y="5.500" width="8" height="10" rx="1" fill="#cbd9f5" transform="rotate(3 14 10)"/><rect x="5" y="7.500" width="6.500" height="9.500" rx="1" fill="#fff" stroke="#0b1f4e" stroke-width=".6" transform="rotate(8 8 12)"/></svg></div>
  <div class="run"><svg width="22" height="22" viewBox="0 0 22 22"><rect width="22" height="22" rx="5" fill="#f5f3f0"/><path d="M0 6V5a5 5 0 0 1 5-5h12a5 5 0 0 1 5 5v1z" fill="#fbc12e"/><path d="M0 11.500h22M0 16.500h22" stroke="#ddd"/></svg></div>
  <div class="run"><svg width="22" height="22" viewBox="0 0 22 22" color="#333"><rect width="22" height="22" rx="5" fill="#eff4f7"/><use href="#knot" x="3" y="3" width="16" height="16"/></svg></div>
  <div class="run"><svg width="22" height="22" viewBox="0 0 22 22"><rect width="22" height="22" rx="5" fill="#fff"/><path d="M14.500 3l4 1.800v12.400l-4 1.800L7 12l-2.500 2L3 13l2.700-2L3 9l1.500-1L7 10zM14.500 7.500L10 11l4.500 3.500z" fill="#2585cf" fill-rule="evenodd"/></svg></div>
  <div class="sep"></div>
  <div><svg width="22" height="26" viewBox="0 0 22 26"><path d="M2 2h18l-3 20q-.3 1.500-2 1.500H7Q5.300 23.500 5 22z" fill="#d5d5d5"/><path d="M4 5l2 17M8 5l1 17M14 5l-1 17M18 5l-2 17M4 12l13-5M5 19l12-7" stroke="#e2e2e2" fill="none"/><ellipse cx="11" cy="2.500" rx="9" ry="2.500" fill="#777"/><path d="M5 2l3-1 2 2 4-2 3 2" stroke="#e9e9e9" fill="none" stroke-width="1.500"/><circle cx="8" cy="3" r="1" fill="#53b0a0"/><circle cx="14" cy="2" r="1" fill="#b1504b"/></svg></div>
</div>
</body>
</html>
